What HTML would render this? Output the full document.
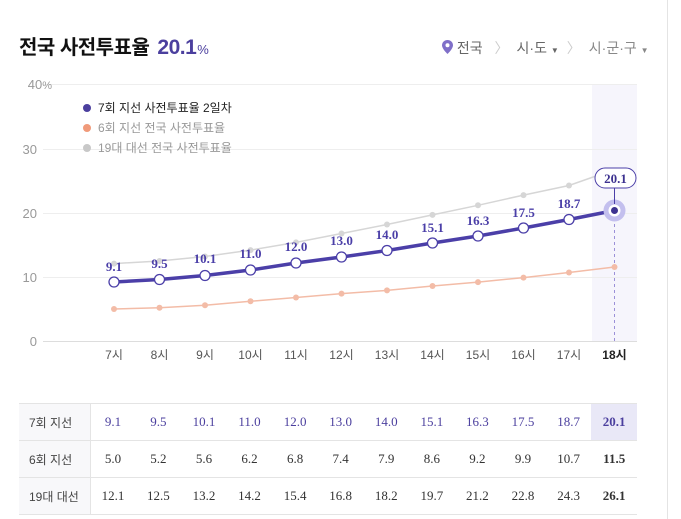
<!DOCTYPE html>
<html><head><meta charset="utf-8"><style>
body{margin:0;width:681px;height:519px;background:#fff;font-family:"Liberation Sans","Noto Sans CJK KR",sans-serif;position:relative;overflow:hidden}
.vl{position:absolute;left:667px;top:0;width:1px;height:519px;background:#e4e4e4}
h1{position:absolute;left:19px;top:31px;margin:0;font-size:20px;font-weight:bold;color:#111;letter-spacing:-0.5px}
h1 .p{color:#4b3f9e;font-size:21px;margin-left:3px}
h1 .p small{font-size:13px;font-weight:normal;margin-left:1px}
.nav{position:absolute;left:442px;top:38px;font-size:14px;color:#666}
table{position:absolute;left:19px;top:403px;border-collapse:collapse;font-size:13px;table-layout:fixed;width:618px}
td{height:37px;padding:0;text-align:center;border-top:1px solid #e4e4e4;border-bottom:1px solid #e4e4e4;color:#333;font-family:"Liberation Serif","Noto Sans CJK KR",serif;box-sizing:border-box}
td.h{background:#f8f8fa;border-right:1px solid #e4e4e4;font-family:"Liberation Sans","Noto Sans CJK KR",sans-serif;font-size:12px;color:#444;text-align:left;padding-left:10px}
tr.a td{color:#4b3f9e}
tr.a td.h{color:#444}
td.b{font-weight:bold}
tr.a td.b{background:#e9e8f7}
</style></head><body>
<div class="vl"></div>
<h1>전국 사전투표율 <span class="p">20.1<small>%</small></span></h1>
<div class="nav"><svg width="11" height="14" viewBox="0 0 11 14" style="vertical-align:-1px"><path d="M5.5 0C2.5 0 0 2.3 0 5.3 0 9 5.5 14 5.5 14S11 9 11 5.3C11 2.3 8.5 0 5.5 0z" fill="#7f6fc8"/><circle cx="5.5" cy="5.3" r="2" fill="#fff"/></svg> 전국 <span style="color:#ccc;margin:0 8px">〉</span>시·도 <span style="font-size:8px">▼</span><span style="color:#ccc;margin:0 8px">〉</span><span style="color:#888">시·군·구 <span style="font-size:8px">▼</span></span></div>
<svg width="681" height="400" style="position:absolute;left:0;top:0" font-family="Liberation Sans, Noto Sans CJK KR, sans-serif">
<rect x="592" y="84" width="45" height="257" fill="#f6f5fc"/>
<g stroke="#eee" stroke-width="1">
<line x1="43" y1="84.5" x2="637" y2="84.5"/><line x1="43" y1="149.5" x2="637" y2="149.5"/><line x1="43" y1="213.5" x2="637" y2="213.5"/><line x1="43" y1="277.5" x2="637" y2="277.5"/></g>
<line x1="43" y1="341.5" x2="637" y2="341.5" stroke="#ddd"/>
<g fill="#999" font-size="13" text-anchor="end"><text x="52" y="89">40<tspan font-size="11">%</tspan></text><text x="37" y="154">30</text><text x="37" y="218">20</text><text x="37" y="282">10</text><text x="37" y="346">0</text></g>
<g font-size="12"><circle cx="87" cy="108" r="4" fill="#4b3f9e"/><text x="98" y="112" fill="#222">7회 지선 사전투표율 2일차</text>
<circle cx="87" cy="128" r="4" fill="#f09a7a"/><text x="98" y="132" fill="#999">6회 지선 전국 사전투표율</text>
<circle cx="87" cy="148" r="4" fill="#c8c8c8"/><text x="98" y="152" fill="#999">19대 대선 전국 사전투표율</text></g>
<line x1="614.5" y1="212" x2="614.5" y2="341" stroke="#9b90d8" stroke-dasharray="3,3"/>
<polyline fill="none" stroke="#d6d6d6" stroke-width="1.5" points="114,263.6 159.5,261 205,256.5 250.5,250.1 296,242.4 341.5,233.5 387,224.5 432.5,214.9 478,205.3 523.5,195.1 569,185.5 596,176"/>
<g fill="#d6d6d6"><circle cx="114" cy="263.6" r="3"/><circle cx="159.5" cy="261" r="3"/><circle cx="205" cy="256.5" r="3"/><circle cx="250.5" cy="250.1" r="3"/><circle cx="296" cy="242.4" r="3"/><circle cx="341.5" cy="233.5" r="3"/><circle cx="387" cy="224.5" r="3"/><circle cx="432.5" cy="214.9" r="3"/><circle cx="478" cy="205.3" r="3"/><circle cx="523.5" cy="195.1" r="3"/><circle cx="569" cy="185.5" r="3"/></g>
<polyline fill="none" stroke="#f3bca7" stroke-width="1.5" points="114,309 159.5,307.7 205,305.2 250.5,301.3 296,297.5 341.5,293.6 387,290.4 432.5,286 478,282.1 523.5,277.6 569,272.5 614.5,267"/>
<g fill="#f3bca7"><circle cx="114" cy="309" r="3"/><circle cx="159.5" cy="307.7" r="3"/><circle cx="205" cy="305.2" r="3"/><circle cx="250.5" cy="301.3" r="3"/><circle cx="296" cy="297.5" r="3"/><circle cx="341.5" cy="293.6" r="3"/><circle cx="387" cy="290.4" r="3"/><circle cx="432.5" cy="286" r="3"/><circle cx="478" cy="282.1" r="3"/><circle cx="523.5" cy="277.6" r="3"/><circle cx="569" cy="272.5" r="3"/><circle cx="614.5" cy="267" r="3"/></g>
<polyline fill="none" stroke="#4b3fa8" stroke-width="3.5" points="114,282 159.5,279.5 205,275.5 250.5,270 296,263 341.5,257 387,250.5 432.5,243 478,236 523.5,228 569,219.5 614.5,210.5"/>
<g fill="#fff" stroke="#4b3fa8" stroke-width="1.3"><circle cx="114" cy="282" r="5"/><circle cx="159.5" cy="279.5" r="5"/><circle cx="205" cy="275.5" r="5"/><circle cx="250.5" cy="270" r="5"/><circle cx="296" cy="263" r="5"/><circle cx="341.5" cy="257" r="5"/><circle cx="387" cy="250.5" r="5"/><circle cx="432.5" cy="243" r="5"/><circle cx="478" cy="236" r="5"/><circle cx="523.5" cy="228" r="5"/><circle cx="569" cy="219.5" r="5"/></g>
<circle cx="614.5" cy="210.5" r="11" fill="#c3bfee"/><circle cx="614.5" cy="210.5" r="6" fill="#fff"/><circle cx="614.5" cy="210.5" r="3.5" fill="#3d3290"/>
<line x1="614.5" y1="188" x2="614.5" y2="204" stroke="#4b3fa8"/>
<rect x="595" y="168" width="41" height="20" rx="10" fill="#fff" stroke="#4b3fa8"/>
<text x="615.5" y="183" text-anchor="middle" font-size="13" font-weight="bold" fill="#3d3290" font-family="Liberation Serif,serif">20.1</text>
<g font-size="13" font-weight="bold" fill="#4b3fa8" text-anchor="middle" font-family="Liberation Serif,serif">
<text x="114" y="271">9.1</text><text x="159.5" y="268">9.5</text><text x="205" y="263">10.1</text><text x="250.5" y="258">11.0</text><text x="296" y="251">12.0</text><text x="341.5" y="245">13.0</text><text x="387" y="239">14.0</text><text x="432.5" y="232">15.1</text><text x="478" y="225">16.3</text><text x="523.5" y="217">17.5</text><text x="569" y="208">18.7</text></g>
<g font-size="12" fill="#555" text-anchor="middle"><text x="114" y="359">7시</text><text x="159.5" y="359">8시</text><text x="205" y="359">9시</text><text x="250.5" y="359">10시</text><text x="296" y="359">11시</text><text x="341.5" y="359">12시</text><text x="387" y="359">13시</text><text x="432.5" y="359">14시</text><text x="478" y="359">15시</text><text x="523.5" y="359">16시</text><text x="569" y="359">17시</text><text x="614.5" y="359" font-weight="bold" fill="#222">18시</text></g>
</svg>
<table>
<colgroup><col style="width:71px"><col span="12"></colgroup>
<tr class="a"><td class="h">7회 지선</td><td>9.1</td><td>9.5</td><td>10.1</td><td>11.0</td><td>12.0</td><td>13.0</td><td>14.0</td><td>15.1</td><td>16.3</td><td>17.5</td><td>18.7</td><td class="b">20.1</td></tr>
<tr><td class="h">6회 지선</td><td>5.0</td><td>5.2</td><td>5.6</td><td>6.2</td><td>6.8</td><td>7.4</td><td>7.9</td><td>8.6</td><td>9.2</td><td>9.9</td><td>10.7</td><td class="b">11.5</td></tr>
<tr><td class="h">19대 대선</td><td>12.1</td><td>12.5</td><td>13.2</td><td>14.2</td><td>15.4</td><td>16.8</td><td>18.2</td><td>19.7</td><td>21.2</td><td>22.8</td><td>24.3</td><td class="b">26.1</td></tr>
</table>
</body></html>
